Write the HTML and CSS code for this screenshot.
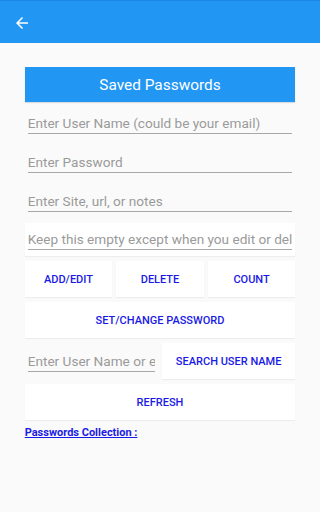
FILE: index.html
```html
<!DOCTYPE html>
<html>
<head>
<meta charset="utf-8">
<meta name="viewport" content="width=device-width, initial-scale=1">
<link rel="stylesheet" href="styles.css">
</head>
<body>
<header class="appbar">
  <svg class="back" viewBox="0 0 24 24" width="18" height="18"><path fill="#fff" d="M20 11H7.83l5.59-5.59L12 4l-8 8 8 8 1.41-1.41L7.83 13H20v-2z"/></svg>
</header>
<main class="content">
  <div class="title">Saved Passwords</div>
  <div class="field first"><span class="ph">Enter User Name (could be your email)</span></div>
  <div class="field"><span class="ph">Enter Password</span></div>
  <div class="field"><span class="ph">Enter Site, url, or notes</span></div>
  <div class="boxed">
    <div class="field inner"><span class="ph">Keep this empty except when you edit or delete</span></div>
  </div>
  <div class="buttons">
    <div class="row three">
      <div class="btn">ADD/EDIT</div>
      <div class="btn">DELETE</div>
      <div class="btn">COUNT</div>
    </div>
    <div class="btn">SET/CHANGE PASSWORD</div>
    <div class="row two">
      <div class="searchbox"><div class="field inner"><span class="ph">Enter User Name or email</span></div></div>
      <div class="btn">SEARCH USER NAME</div>
    </div>
    <div class="btn">REFRESH</div>
  </div>
  <div class="collection">Passwords Collection :</div>
</main>
</body>
</html>
```
FILE: styles.css
```css
html, body {
  margin: 0;
  padding: 0;
  background: #fafafa;
  font-family: Roboto, "Liberation Sans", sans-serif;
  overflow: hidden;
}
.appbar {
  height: 42px;
  background: #2196f3;
  border-top: 1px solid #1e88e5;
  display: flex;
  align-items: center;
  padding-left: 4.03%;
}
.back {
  display: block;
  margin-top: 1px;
}
.content {
  padding: 24px 7.72% 0;
}
.title {
  height: 35px;
  background: #2196f3;
  color: #fff;
  font-size: 15.4px;
  display: flex;
  align-items: center;
  justify-content: center;
  box-shadow: 0 1px 1px rgba(0,0,0,0.12);
}
.field {
  margin: 19px 3px 0;
  height: 19px;
  border-bottom: 1px solid #a8a8a8;
  display: flex;
  align-items: center;
  overflow: hidden;
  white-space: nowrap;
  min-width: 0;
}
.field.first {
  margin-top: 12px;
}
.ph {
  color: #9a9a9a;
  font-size: 13.6px;
  line-height: 19px;
  flex: none;
}
.boxed {
  margin-top: 11px;
  background: #fff;
  padding: 7px 3px 6px;
  box-shadow: 0 1px 1px rgba(0,0,0,0.05);
}
.field.inner {
  margin: 0;
}
.buttons {
  margin-top: 5px;
  display: flex;
  flex-direction: column;
  gap: 5px;
}
.row {
  display: grid;
  gap: 4px;
}
.row.three {
  grid-template-columns: repeat(3, minmax(0, 1fr));
}
.row.two {
  grid-template-columns: repeat(2, minmax(0, 1fr));
}
.btn {
  height: 36px;
  background: #fff;
  color: #1a1ae6;
  font-size: 11px;
  font-weight: 500;
  display: flex;
  align-items: center;
  justify-content: center;
  white-space: nowrap;
  box-shadow: 0 1px 1px rgba(0,0,0,0.05);
}
.searchbox {
  padding: 9px 3px 0;
  min-width: 0;
}
.collection {
  margin-top: 6px;
  color: #1a1ae6;
  font-size: 11px;
  font-weight: 700;
  text-decoration: underline;
}
```
